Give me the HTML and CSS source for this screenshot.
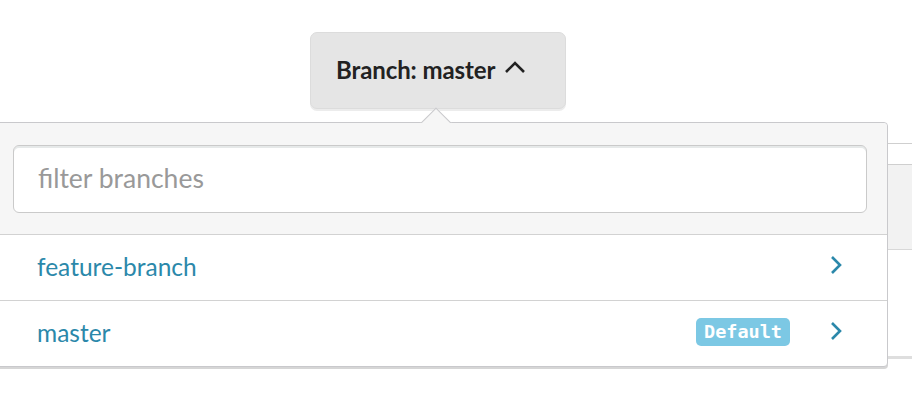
FILE: index.html
```html
<!DOCTYPE html>
<html>
<head>
<meta charset="utf-8">
<link rel="stylesheet" href="styles.css">
</head>
<body>
<div class="page">
  <div class="toolbar">
    <button class="branch-btn">
      <span class="branch-label">Branch: master</span>
      <svg class="chev-up" width="22" height="14" viewBox="0 0 22 14"><path d="M2 12 L11 3 L20 12" fill="none" stroke="#222" stroke-width="2.6"/></svg>
    </button>
  </div>
  <div class="underlay">
    <div class="ul-head"></div>
    <div class="ul-body"></div>
    <div class="ul-row"></div>
  </div>
  <div class="dropdown">
    <div class="caret"></div>
    <div class="dd-head">
      <input class="filter" type="text" placeholder="filter branches">
    </div>
    <ul class="branch-list">
      <li class="branch-row">
        <span class="branch-name">feature-branch</span>
        <svg class="chev-right" width="14" height="20" viewBox="0 0 14 20"><path d="M3 2 L11 10 L3 18" fill="none" stroke="#2b88aa" stroke-width="2.6"/></svg>
      </li>
      <li class="branch-row">
        <span class="branch-name">master</span>
        <span class="badge">Default</span>
        <svg class="chev-right" width="14" height="20" viewBox="0 0 14 20"><path d="M3 2 L11 10 L3 18" fill="none" stroke="#2b88aa" stroke-width="2.6"/></svg>
      </li>
    </ul>
  </div>
</div>
</body>
</html>
```

FILE: styles.css
```css
html, body {
  margin: 0;
  padding: 0;
  background: #fff;
}
.page {
  position: relative;
  width: 912px;
  height: 404px;
  overflow: hidden;
  font-family: "Lato", "Open Sans", sans-serif;
}
.toolbar {
  padding: 32px 0 0 310px;
  height: 78px;
}
.branch-btn {
  display: flex;
  align-items: center;
  box-sizing: border-box;
  width: 256px;
  height: 77px;
  padding: 0 0 2px 25px;
  background: #e5e5e5;
  border: 1px solid #dcdcdc;
  border-radius: 7px;
  box-shadow: 0 2px 0 #ececec;
  font-family: inherit;
  cursor: pointer;
}
.branch-label {
  font-size: 24px;
  font-weight: 700;
  color: #222;
  letter-spacing: -0.1px;
}
.chev-up {
  margin-left: 9px;
  margin-top: -6px;
}
.underlay {
  margin-top: 33px;
  margin-left: 870px;
}
.ul-head {
  height: 20px;
  border-top: 1px solid #cfcfcf;
  border-bottom: 1px solid #cfcfcf;
}
.ul-body {
  height: 84px;
  background: #f2f2f2;
  border-bottom: 1px solid #d8d8d8;
}
.ul-row {
  height: 106px;
  border-bottom: 3px solid #dedede;
}
.dropdown {
  position: absolute;
  left: -10px;
  top: 122px;
  width: 898px;
  box-sizing: border-box;
  background: #fff;
  border: 1px solid #c9c9cc;
  border-radius: 4px;
  box-shadow: 0 2px 0 #d6d6d6;
}
.caret {
  position: absolute;
  top: -11px;
  left: 434px;
  width: 21px;
  height: 21px;
  background: #f6f6f6;
  border-left: 1px solid #c9c9cc;
  border-top: 1px solid #c9c9cc;
  transform: rotate(45deg);
}
.dd-head {
  position: relative;
  background: #f6f6f6;
  padding: 22px 20px 21px 22px;
  border-bottom: 1px solid #d2d2d2;
  border-radius: 4px 4px 0 0;
}
.filter {
  display: block;
  box-sizing: border-box;
  width: 100%;
  height: 68px;
  padding: 0 0 2px 24px;
  background: #fff;
  border: 1px solid #cacaca;
  border-radius: 6px;
  box-shadow: inset 0 2px 0 #e6e9e9;
  font-family: inherit;
  font-size: 26.5px;
  color: #333;
  outline: none;
}
.filter::placeholder {
  color: #999;
}
.branch-list {
  list-style: none;
  margin: 0;
  padding: 0;
}
.branch-row {
  display: flex;
  align-items: center;
  height: 65px;
  padding: 0 44px 0 46px;
  border-bottom: 1px solid #d2d2d2;
}
.branch-row:last-child {
  border-bottom: none;
}
.branch-name {
  flex: 1;
  font-size: 24.5px;
  color: #2b88aa;
  margin-top: -2px;
}
.badge {
  display: inline-flex;
  align-items: center;
  height: 27px;
  padding: 0 8px 1px;
  margin-right: 39px;
  margin-top: -4px;
  background: #7cc8e4;
  color: #fff;
  border-radius: 5px;
  font-family: "DejaVu Sans Mono", "Liberation Mono", monospace;
  font-weight: 700;
  font-size: 18.5px;
}
.chev-right {
  display: block;
  margin-top: -6px;
}
```
